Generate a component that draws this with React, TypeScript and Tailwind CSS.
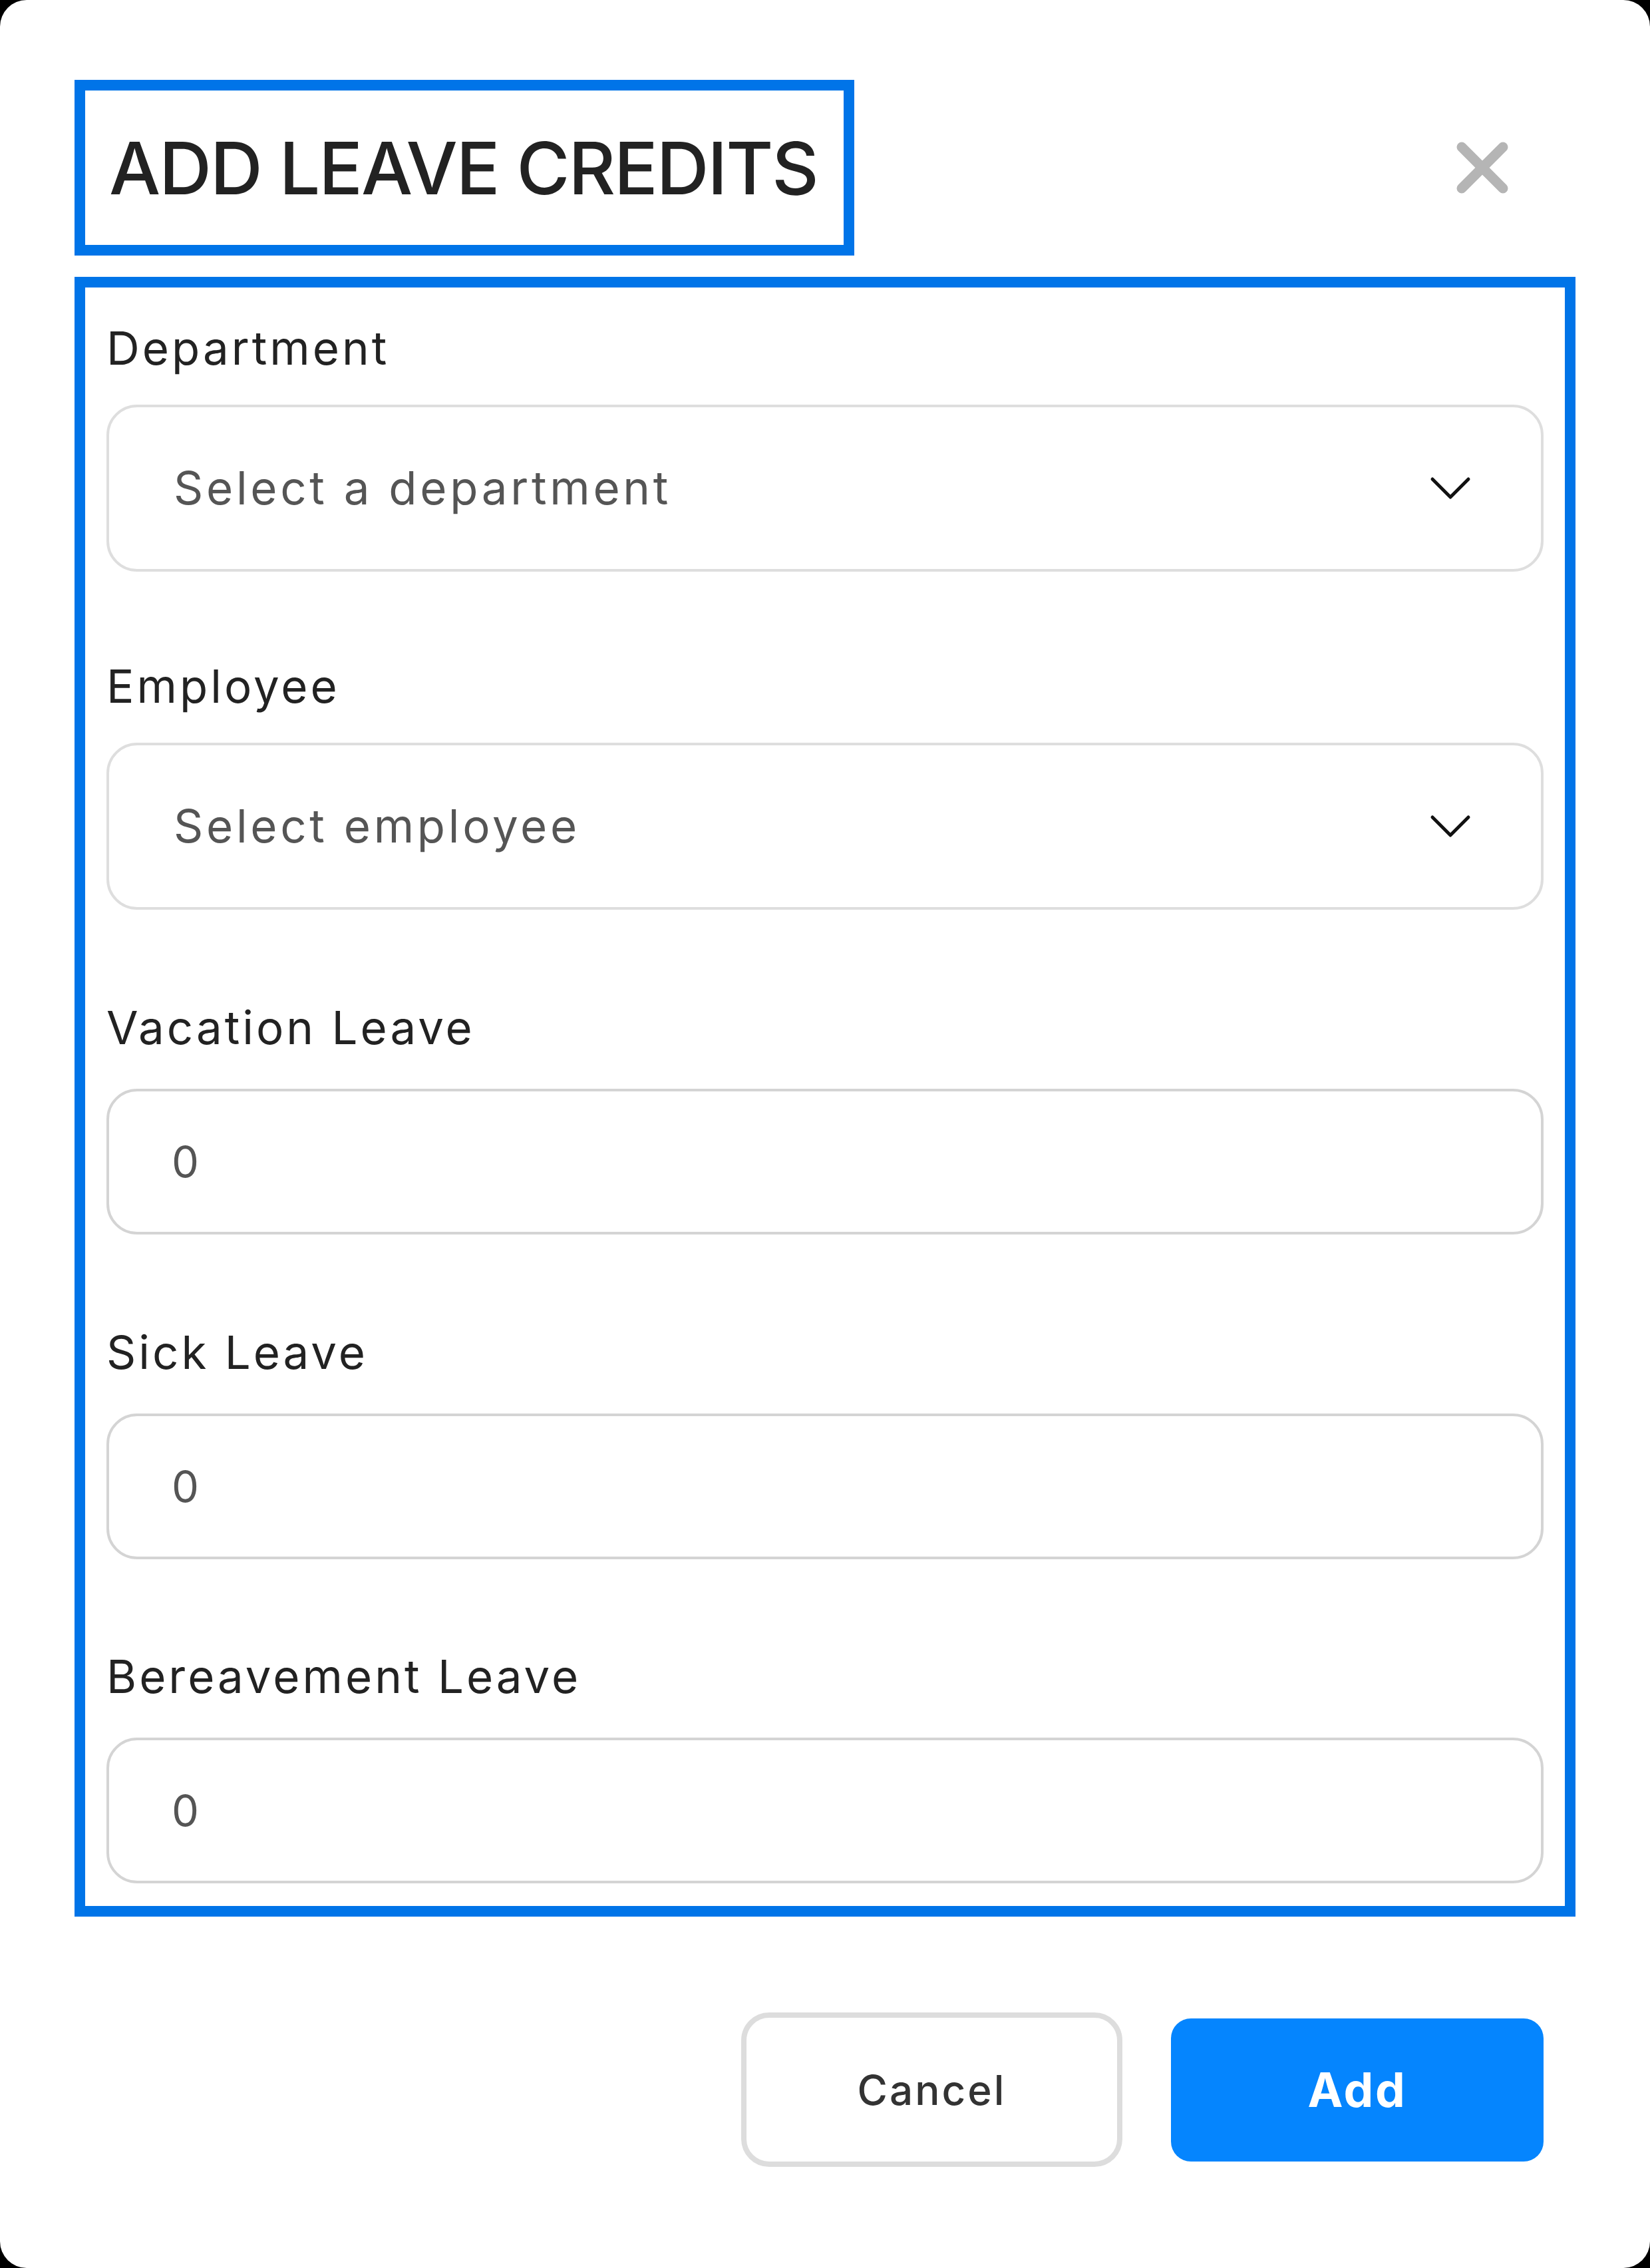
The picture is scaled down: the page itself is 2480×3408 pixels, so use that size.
import { useState } from 'react';

type Field = {
  label: string;
  kind: 'select' | 'number';
  placeholder?: string;
  gap: string;
};

const fields: Field[] = [
  { label: 'Department', kind: 'select', placeholder: 'Select a department', gap: 'mt-0' },
  { label: 'Employee', kind: 'select', placeholder: 'Select employee', gap: 'mt-[130px]' },
  { label: 'Vacation Leave', kind: 'number', gap: 'mt-[135px]' },
  { label: 'Sick Leave', kind: 'number', gap: 'mt-[135px]' },
  { label: 'Bereavement Leave', kind: 'number', gap: 'mt-[134px]' },
];

function Chevron() {
  return (
    <svg width="66" height="39" viewBox="0 0 66 39" fill="none">
      <path d="M6 6 L33 33 L60 6" stroke="#111111" strokeWidth="5" strokeLinecap="round" strokeLinejoin="round" />
    </svg>
  );
}

function CloseIcon() {
  return (
    <svg width="78" height="78" viewBox="0 0 78 78" fill="none">
      <path d="M8 8 L70 70 M70 8 L8 70" stroke="#B5B5B5" strokeWidth="15" strokeLinecap="round" />
    </svg>
  );
}

export default function App() {
  const [values, setValues] = useState<Record<string, string>>({});

  return (
    <div className="w-[2480px] h-[3408px] bg-black" style={{ fontFamily: 'Inter, "Noto Sans", sans-serif' }}>
      <div className="w-full h-full bg-white rounded-[40px] pt-[120px] flex flex-col">
        {/* Header */}
        <div className="flex items-center justify-between pl-[112px] pr-[213px]">
          <div className="w-[1172px] h-[264px] border-[16px] border-[#0074E8] flex items-center pl-[36px] overflow-hidden">
            <h1 className="text-[109px] leading-none font-medium text-[#222222] tracking-[-2px] whitespace-nowrap">ADD LEAVE CREDITS</h1>
          </div>
          <button className="w-[78px] h-[78px] flex items-center justify-center">
            <CloseIcon />
          </button>
        </div>

        {/* Form */}
        <div className="mx-[112px] mt-[32px] border-[16px] border-[#0074E8] px-[32px] pt-[49px] pb-[34px] flex flex-col">
          {fields.map((f) => (
            <div key={f.label} className={`flex flex-col ${f.gap}`}>
              <label className={`text-[69px] leading-[84px] tracking-[4px] text-[#222222] ${f.kind === 'select' ? 'mb-[43px]' : 'mb-[50px]'}`}>
                {f.label}
              </label>
              {f.kind === 'select' ? (
                <div className="h-[251px] border-4 border-[#DEDEDE] rounded-[46px] flex items-center justify-between pl-[97px] pr-[103px]">
                  <span className="text-[69px] leading-none tracking-[4.7px] text-[#555555]">{f.placeholder}</span>
                  <Chevron />
                </div>
              ) : (
                <div className="h-[219px] border-4 border-[#D4D4D4] rounded-[46px] flex items-center pl-[94px]">
                  <input
                    type="text"
                    value={values[f.label] ?? '0'}
                    onChange={(e) => setValues({ ...values, [f.label]: e.target.value })}
                    className="w-full text-[65px] leading-none text-[#555555] outline-none bg-transparent"
                  />
                </div>
              )}
            </div>
          ))}
        </div>

        {/* Actions */}
        <div className="mt-[144px] flex items-center justify-end gap-[73px] pr-[160px]">
          <button className="w-[573px] h-[232px] border-8 border-[#DDDDDD] rounded-[42px] text-[62px] font-medium tracking-[3px] text-[#333333]">
            Cancel
          </button>
          <button className="w-[560px] h-[215px] rounded-[30px] bg-[#0585FE] text-[71px] font-bold tracking-[2.7px] text-white">
            Add
          </button>
        </div>
      </div>
    </div>
  );
}
